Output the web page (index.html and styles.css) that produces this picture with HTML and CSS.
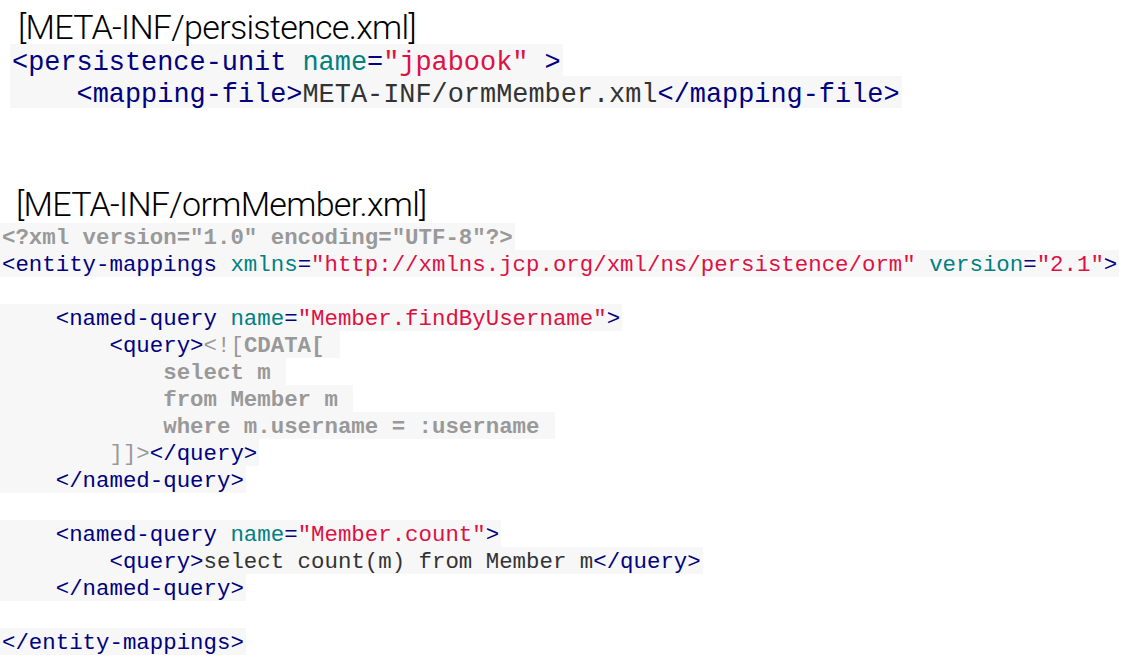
FILE: index.html
```html
<!DOCTYPE html>
<html lang="en">
<head>
  <meta charset="UTF-8">
  <title>ormMember.xml</title>
  <link rel="stylesheet" href="styles.css">
</head>
<body>
  <div class="slide">
    <h2 class="file-title first">[META-INF/persistence.xml]</h2>
    <div class="code big">
      <div class="line"><span class="tag">&lt;persistence-unit</span> <span class="attr">name</span><span class="tag">=</span><span class="val">"jpabook"</span> <span class="tag">&gt;</span></div>
      <div class="line">    <span class="tag">&lt;mapping-file&gt;</span>META-INF/ormMember.xml<span class="tag">&lt;/mapping-file&gt;</span></div>
    </div>

    <h2 class="file-title second">[META-INF/ormMember.xml]</h2>
    <div class="code small">
      <div class="line"><span class="meta">&lt;?xml version="1.0" encoding="UTF-8"?&gt;</span></div>
      <div class="line"><span class="tag">&lt;entity-mappings</span> <span class="attr">xmlns</span><span class="tag">=</span><span class="val">"http://xmlns.jcp.org/xml/ns/persistence/orm"</span> <span class="attr">version</span><span class="tag">=</span><span class="val">"2.1"</span><span class="tag">&gt;</span></div>
      <div class="blank"></div>
      <div class="line">    <span class="tag">&lt;named-query</span> <span class="attr">name</span><span class="tag">=</span><span class="val">"Member.findByUsername"</span><span class="tag">&gt;</span></div>
      <div class="line">        <span class="tag">&lt;query&gt;</span><span class="cdata">&lt;![</span><span class="meta">CDATA[</span> </div>
      <div class="line">            <span class="meta">select m</span> </div>
      <div class="line">            <span class="meta">from Member m</span> </div>
      <div class="line">            <span class="meta">where m.username = :username</span> </div>
      <div class="line">        <span class="cdata">]]&gt;</span><span class="tag">&lt;/query&gt;</span></div>
      <div class="line">    <span class="tag">&lt;/named-query&gt;</span></div>
      <div class="blank"></div>
      <div class="line">    <span class="tag">&lt;named-query</span> <span class="attr">name</span><span class="tag">=</span><span class="val">"Member.count"</span><span class="tag">&gt;</span></div>
      <div class="line">        <span class="tag">&lt;query&gt;</span>select count(m) from Member m<span class="tag">&lt;/query&gt;</span></div>
      <div class="line">    <span class="tag">&lt;/named-query&gt;</span></div>
      <div class="blank"></div>
      <div class="line"><span class="tag">&lt;/entity-mappings&gt;</span></div>
    </div>
  </div>
</body>
</html>
```

FILE: styles.css
```css
body {
  margin: 0;
  background: #fff;
  color: #000;
}
.slide {
  width: 1121px;
  height: 660px;
  overflow: hidden;
}
.file-title {
  margin: 0;
  font-family: Roboto, "Liberation Sans", sans-serif;
  font-weight: 300;
  font-size: 34px;
  line-height: 40px;
  letter-spacing: -0.7px;
  color: #000;
}
.file-title.first {
  padding: 7px 0 0 18px;
  height: 37px;
}
.file-title.second {
  margin-top: 70px;
  padding: 6px 0 0 16px;
  height: 39px;
}
.code {
  font-family: "Liberation Mono", "Courier New", monospace;
  color: #333;
}
.code.big {
  font-size: 26.9px;
  line-height: 32px;
  margin-left: 10px;
}
.code.big .line {
  padding-top: 3px;
  height: 29px;
}
.code.small {
  font-size: 22.4px;
  line-height: 27px;
}
.code.small .line {
  padding-top: 2px;
  height: 25px;
}
.line {
  width: fit-content;
  white-space: pre;
  background: #f7f7f7;
  padding-left: 2px;
  padding-right: 2px;
}
.blank {
  height: 27px;
}
.tag { color: #000080; }
.attr { color: #008080; }
.val { color: #dd1144; }
.meta { color: #999; font-weight: bold; }
.cdata { color: #999; }
```
